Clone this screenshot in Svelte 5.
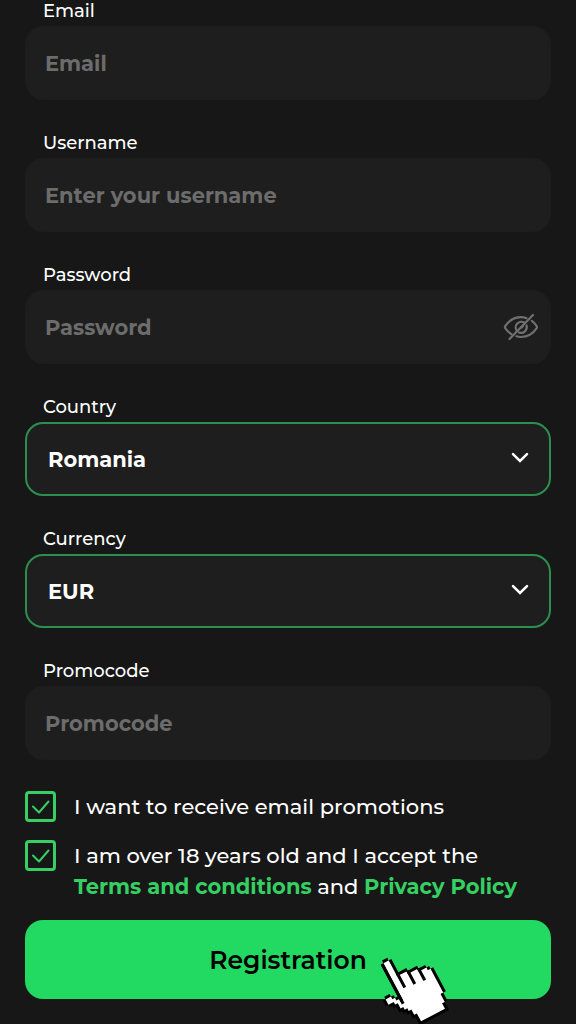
<script>
  let showPassword = $state(false);
  let country = $state('Romania');
  let currency = $state('EUR');
  let promotions = $state(true);
  let accepted = $state(true);
</script>

{#snippet chevron()}
  <svg class="chevron" viewBox="0 0 18 12" aria-hidden="true">
    <path d="M2 2.2 9 9 16 2.2" fill="none" stroke="#fff" stroke-width="2.5" stroke-linecap="round" stroke-linejoin="miter" />
  </svg>
{/snippet}

{#snippet tick()}
  <svg class="tick" viewBox="0 0 31 31" aria-hidden="true">
    <path d="M8 15.5 14 21.5 23.5 10.5" fill="none" stroke="#35cf63" stroke-width="2" stroke-linecap="round" stroke-linejoin="round" />
  </svg>
{/snippet}

<form class="form" onsubmit={(event) => event.preventDefault()}>
  <div class="field">
    <label for="email">Email</label>
    <div class="control"><input id="email" type="email" placeholder="Email" /></div>
  </div>

  <div class="field">
    <label for="username">Username</label>
    <div class="control"><input id="username" type="text" placeholder="Enter your username" /></div>
  </div>

  <div class="field">
    <label for="password">Password</label>
    <div class="control">
      <input id="password" type={showPassword ? 'text' : 'password'} placeholder="Password" />
      <button class="reveal" type="button" aria-label="Show password" onclick={() => (showPassword = !showPassword)}>
        <svg viewBox="0 0 36 28" fill="none" stroke="#707070" stroke-width="2.2" stroke-linecap="round" stroke-linejoin="round" aria-hidden="true">
          <path d="M23.5 5.2C21.8 4.5 20 4.1 18 4.1 11 4.1 5.500 8.300 2.400 12.800Q1.500 14.100 2.400 15.400C4 17.700 6 19.700 8.400 21.200" />
          <path d="M13.400 23.300C14.900 23.800 16.400 24 18 24 25 24 30.500 19.900 33.600 15.400Q34.500 14.100 33.600 12.800C32.300 10.900 30.700 9.200 28.800 7.800" />
          <path d="M21.600 9.800A5.700 5.700 0 0 0 13.800 17.900" />
          <path d="M15.900 19.400A5.700 5.700 0 0 0 23.500 12.400" />
          <path d="M18.200 14.800 20 13" />
          <path d="M6.500 26 30 2" />
        </svg>
      </button>
    </div>
  </div>

  <div class="field">
    <label for="country">Country</label>
    <div class="control">
      <select id="country" bind:value={country}>
        <option>Romania</option>
      </select>
      {@render chevron()}
    </div>
  </div>

  <div class="field">
    <label for="currency">Currency</label>
    <div class="control">
      <select id="currency" bind:value={currency}>
        <option>EUR</option>
      </select>
      {@render chevron()}
    </div>
  </div>

  <div class="field">
    <label for="promocode">Promocode</label>
    <div class="control"><input id="promocode" type="text" placeholder="Promocode" /></div>
  </div>

  <div class="actions">
    <div class="consent">
      <span class="box">
        <input id="promotions" type="checkbox" bind:checked={promotions} />
        {#if promotions}{@render tick()}{/if}
      </span>
      <label for="promotions">I want to receive email promotions</label>
    </div>
    <div class="consent">
      <span class="box">
        <input id="accepted" type="checkbox" bind:checked={accepted} />
        {#if accepted}{@render tick()}{/if}
      </span>
      <label for="accepted">
        I am over 18 years old and I accept the<br />
        <a href="#terms">Terms and conditions</a> and <a href="#privacy">Privacy Policy</a>
      </label>
    </div>

    <div class="submit">
      <button class="register" type="submit">Registration</button>
      <svg class="pointer" viewBox="0 0 228 216" aria-hidden="true">
        <g transform="translate(10 30) rotate(-28) scale(9)">
          <path d="M1 0H3V1H4V6H7V7H10.5V8H13V9H14V10H15V19H14V22H13V25H2V22H1V20H0V19H-1V18H-2V16H-3V15H-4V14H-5V12H-4V11H-2V12H-1V13H0V1H1Z" />
          <path d="M1 1H3V7H6.5V8H10V9H13V10H14V19H13V22H12V24H3V21H2V19H1V18H0V17H-1V15H-2V14H-4V12H-2V13H-1V14H0V15H1Z" fill="#fff" />
          <path d="M0 1H1V16H0ZM3 6H4V11.500H3ZM6.500 7H7.500V12H6.500ZM10 8H11V12.500H10Z" />
        </g>
      </svg>
    </div>
  </div>
</form>

<style>
  :global(body) {
    background: #171717;
  }

  .form {
    box-sizing: border-box;
    display: flex;
    flex-direction: column;
    gap: 32px;
    padding: 0 25px 25px 25px;
    overflow: hidden;
    background: #171717;
    color: #fff;
    font-family: Montserrat, Inter, sans-serif;
    font-size: 21px;
    font-weight: 500;
  }

  .field {
    display: flex;
    flex-direction: column;
    gap: 3px;
  }

  .field label {
    padding-left: 18px;
    font-size: 18px;
    line-height: 23px;
  }

  .control {
    display: grid;
    align-items: center;
  }

  .control > * {
    grid-area: 1 / 1;
  }

  .control input,
  .control select {
    box-sizing: border-box;
    width: 100%;
    height: 74px;
    margin: 0;
    padding: 0 64px 0 19px;
    appearance: none;
    border: 1px solid #1d1d1d;
    border-radius: 18px;
    background: #1e1e1e;
    color: #fff;
    font: inherit;
    font-weight: 700;
  }

  .control input::placeholder {
    color: #6c6c6c;
    opacity: 1;
  }

  .control select {
    padding-left: 21px;
    border: 2px solid #2d8f4d;
  }

  .chevron {
    width: 18px;
    height: 12px;
    margin: 0 22px 2px 0;
    justify-self: end;
    pointer-events: none;
  }

  .reveal {
    display: flex;
    justify-self: end;
    margin-right: 12px;
    padding: 0;
    border: 0;
    background: none;
    cursor: pointer;
  }

  .reveal svg {
    width: 36px;
    height: 28px;
  }

  .actions {
    display: flex;
    flex-direction: column;
    gap: 18px;
    margin-top: -1px;
  }

  .consent {
    display: flex;
    gap: 18px;
    line-height: 31px;
  }

  .box {
    display: grid;
    flex: none;
    width: 31px;
    height: 31px;
  }

  .box > * {
    grid-area: 1 / 1;
    box-sizing: border-box;
    width: 31px;
    height: 31px;
    margin: 0;
  }

  .box input {
    appearance: none;
    border: 3px solid #35cf63;
    border-radius: 4px;
  }

  .tick {
    pointer-events: none;
  }

  .consent a {
    color: #35cf63;
    font-weight: 700;
    text-decoration: none;
  }

  .submit {
    position: relative;
  }

  .register {
    display: block;
    width: 100%;
    height: 79px;
    padding: 0;
    border: 0;
    border-radius: 18px;
    background: #22d961;
    color: #000;
    font: inherit;
    font-size: 25px;
    font-weight: 600;
    cursor: pointer;
  }

  .pointer {
    position: absolute;
    top: 32px;
    left: calc(50% + 88px);
    width: 76px;
    height: 72px;
    pointer-events: none;
  }
</style>
